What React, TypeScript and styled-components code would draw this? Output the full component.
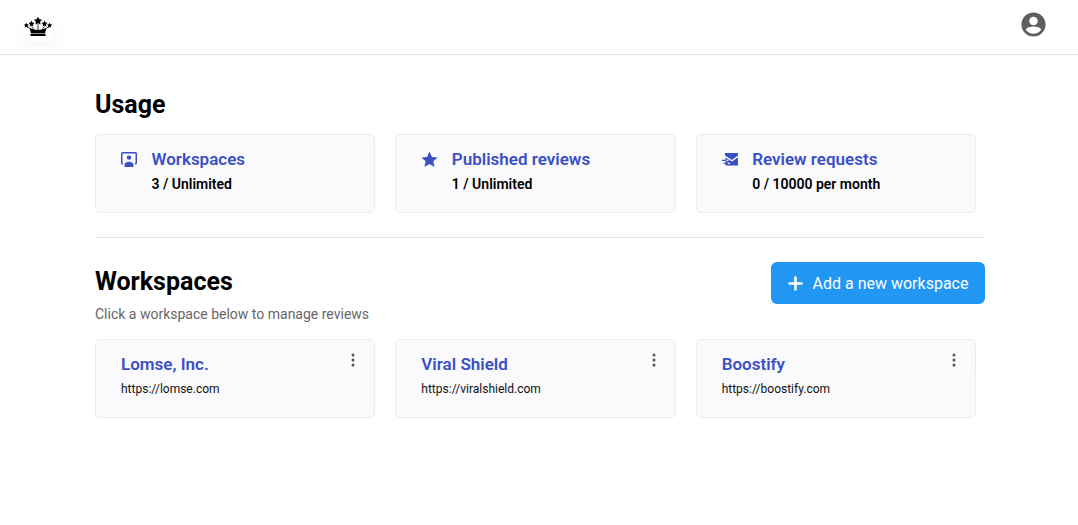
import React from 'react'
import styled, { createGlobalStyle } from 'styled-components';

const GlobalStyle = createGlobalStyle`
  html, body {
    margin: 0;
    padding: 0;
    background: #fff;
    font-family: Roboto, "Liberation Sans", sans-serif;
  }
`;

const starPoints = (cx: number, cy: number, r: number) => {
    const points: string[] = [];
    for (let i = 0; i < 10; i++) {
        const radius = i % 2 === 0 ? r : r * 0.5;
        const angle = (Math.PI / 5) * i - Math.PI / 2;
        points.push(`${cx + radius * Math.cos(angle)},${cy + radius * Math.sin(angle)}`);
    }
    return points.join(' ');
};

const CrownLogo = () => (
    <svg width="28" height="20" viewBox="0 0 28 20" fill="#000">
        <polygon points={starPoints(14, 4, 4.4)} />
        <polygon points={starPoints(7.5, 6.8, 3.2)} />
        <polygon points={starPoints(20.5, 6.8, 3.2)} />
        <polygon points={starPoints(2.4, 8.4, 2.7)} />
        <polygon points={starPoints(25.6, 8.4, 2.7)} />
        <path d="M7.500 9.500 Q9 11 10 13 M14 7 V13 M20.500 9.500 Q19 11 18 13 M3 10 Q5.500 10.500 7 12.500 M25 10 Q22.500 10.500 21 12.500" fill="none" stroke="#000" strokeWidth="0.8" />
        <path d="M5.500 11 Q14 15 22.500 11 L21 16.200 H7z" />
        <rect x="6.500" y="16.800" width="15" height="2.200" rx="0.6" />
    </svg>
);

const AccountIcon = () => (
    <svg width="29" height="29" viewBox="0 0 24 24" fill="#5f5f5f">
        <path d="M12 2C6.480 2 2 6.480 2 12s4.480 10 10 10 10-4.480 10-10S17.520 2 12 2zm0 3.500c1.930 0 3.500 1.570 3.500 3.500S13.930 12.500 12 12.500 8.500 10.930 8.500 9 10.070 5.500 12 5.500zm0 14.100c-2.600 0-4.900-1.300-6.300-3.300.1-1.700 4.200-2.600 6.300-2.600s6.200.9 6.300 2.600c-1.400 2-3.700 3.300-6.300 3.300z" />
    </svg>
);

const WorkspaceIcon = () => (
    <svg width="16" height="15" viewBox="0 0 16 15" fill="#3a50c4">
        <path d="M1.500 0h13A1.500 1.500 0 0 1 16 1.500V11a1.500 1.500 0 0 1-1.500 1.500H14V11h.5V1.500h-13V11H2v1.500h-.5A1.500 1.500 0 0 1 0 11V1.500A1.500 1.500 0 0 1 1.500 0z" />
        <circle cx="8" cy="5.600" r="2.200" />
        <path d="M3.500 13c0-2 2.700-3.200 4.500-3.200s4.500 1.200 4.500 3.200v2h-9z" />
    </svg>
);

const StarIcon = () => (
    <svg width="17" height="17" viewBox="0 0 17 17" fill="#3a50c4">
        <path d="M8.500.6l2.400 5.300 5.700.6-4.300 3.800 1.300 5.700-5.100-3-5.100 3 1.300-5.700L.4 6.500l5.700-.6z" />
    </svg>
);

const MailIcon = () => (
    <svg width="16" height="13" viewBox="0 0 16 13" fill="#3a50c4">
        <path d="M3 0h13v2.600L10 7 3 2.600z" />
        <path d="M16 4.200V12.500H3.500V11H8V9.800H3.500V8H6.500V6.800H3.500V4.500L10 8.600z" />
        <path d="M0 6.800h4.500V8H0zM1.500 9.800h4.500V11H1.500z" />
    </svg>
);

const PlusIcon = () => (
    <svg width="15" height="15" viewBox="0 0 15 15" fill="#fff">
        <path d="M6.200 0.500h2.600v5.700h5.700v2.600H8.800v5.700H6.200V8.800H.5V6.200h5.700z" />
    </svg>
);

const DotsIcon = () => (
    <svg width="4" height="14" viewBox="0 0 4 14" fill="#555">
        <circle cx="2" cy="2" r="1.500" />
        <circle cx="2" cy="7" r="1.500" />
        <circle cx="2" cy="12" r="1.500" />
    </svg>
);

const usage = [
    { icon: <WorkspaceIcon />, title: 'Workspaces', value: '3 / Unlimited' },
    { icon: <StarIcon />, title: 'Published reviews', value: '1 / Unlimited' },
    { icon: <MailIcon />, title: 'Review requests', value: '0 / 10000 per month' },
];

const workspaces = [
    { name: 'Lomse, Inc.', url: 'https://lomse.com' },
    { name: 'Viral Shield', url: 'https://viralshield.com' },
    { name: 'Boostify', url: 'https://boostify.com' },
];

const App: React.FC = () => {
    return (
        <>
            <GlobalStyle />
            <Header>
                <LogoBox><CrownLogo /></LogoBox>
                <AccountSlot><AccountIcon /></AccountSlot>
            </Header>
            <Main>
                <Heading>Usage</Heading>
                <CardGrid>
                    {usage.map(item => (
                        <UsageCard key={item.title}>
                            <IconSlot>{item.icon}</IconSlot>
                            <div>
                                <CardTitle>{item.title}</CardTitle>
                                <UsageValue>{item.value}</UsageValue>
                            </div>
                        </UsageCard>
                    ))}
                </CardGrid>
                <Divider />
                <SectionHeader>
                    <SectionIntro>
                        <Heading>Workspaces</Heading>
                        <Subtext>Click a workspace below to manage reviews</Subtext>
                    </SectionIntro>
                    <AddButton><PlusIcon />Add a new workspace</AddButton>
                </SectionHeader>
                <CardGrid>
                    {workspaces.map(item => (
                        <WorkspaceCard key={item.name}>
                            <WorkspaceInfo>
                                <CardTitle>{item.name}</CardTitle>
                                <WorkspaceUrl>{item.url}</WorkspaceUrl>
                            </WorkspaceInfo>
                            <MenuButton><DotsIcon /></MenuButton>
                        </WorkspaceCard>
                    ))}
                </CardGrid>
            </Main>
        </>
    )
}

export default App;


const Header = styled.header`
  height: 54px;
  border-bottom: 1px solid #e4e4e4;
  display: flex;
  align-items: center;
  justify-content: space-between;
  padding: 0 30px 0 20px;
`;

const LogoBox = styled.div`
  width: 36px;
  height: 28px;
  display: flex;
  align-items: center;
  justify-content: center;
  border-radius: 10px;
  box-shadow: 0 8px 14px rgba(0, 0, 0, 0.035);
`;

const AccountSlot = styled.div`
  display: flex;
  margin-bottom: 6px;
`;

const Main = styled.main`
  width: 890px;
  margin-left: 95px;
  padding-top: 34px;
`;

const Heading = styled.h2`
  margin: 0;
  font-size: 25px;
  line-height: 32px;
  font-weight: 700;
  color: #000;
`;

const CardGrid = styled.div`
  display: grid;
  grid-template-columns: repeat(3, 280.33px);
  column-gap: 20px;
`;

const Card = styled.div`
  box-sizing: border-box;
  height: 79px;
  background: #fafafd;
  border: 1px solid #ececf0;
  border-radius: 5px;
`;

const UsageCard = styled(Card)`
  display: flex;
  padding: 12px 25px;
  margin-top: 13px;
`;

const IconSlot = styled.div`
  width: 30.5px;
  height: 25px;
  display: flex;
  align-items: center;
`;

const CardTitle = styled.div`
  font-size: 17px;
  line-height: 24px;
  font-weight: 600;
  color: #3a50c4;
`;

const UsageValue = styled.div`
  margin-top: 4px;
  font-size: 14px;
  line-height: 18px;
  font-weight: 600;
  color: #000;
`;

const Divider = styled.hr`
  margin: 24px 0 24px;
  border: 0;
  border-top: 1px solid #e4e4e4;
`;

const SectionHeader = styled.div`
  display: flex;
  justify-content: space-between;
  align-items: flex-start;
`;

const SectionIntro = styled.div`
  padding-top: 4px;
`;

const Subtext = styled.p`
  margin: 7px 0 0;
  font-size: 14px;
  line-height: 18px;
  color: #666;
`;

const AddButton = styled.button`
  width: 214px;
  height: 42px;
  display: flex;
  align-items: center;
  justify-content: center;
  gap: 10px;
  background: #2196f3;
  border: none;
  border-radius: 6px;
  color: #fff;
  font-family: inherit;
  font-size: 16px;
  cursor: pointer;
`;

const WorkspaceCard = styled(Card)`
  display: flex;
  justify-content: space-between;
  padding: 3px 4px 3px 25px;
  margin-top: 16px;
`;

const WorkspaceInfo = styled.div`
  padding-top: 9px;
`;

const WorkspaceUrl = styled.div`
  margin-top: 4px;
  font-size: 12px;
  line-height: 18px;
  color: #111;
`;

const MenuButton = styled.button`
  width: 34px;
  height: 34px;
  padding: 0;
  display: flex;
  align-items: center;
  justify-content: center;
  background: rgba(255, 255, 255, 0.2);
  border: none;
  border-radius: 8px;
  cursor: pointer;
`;
